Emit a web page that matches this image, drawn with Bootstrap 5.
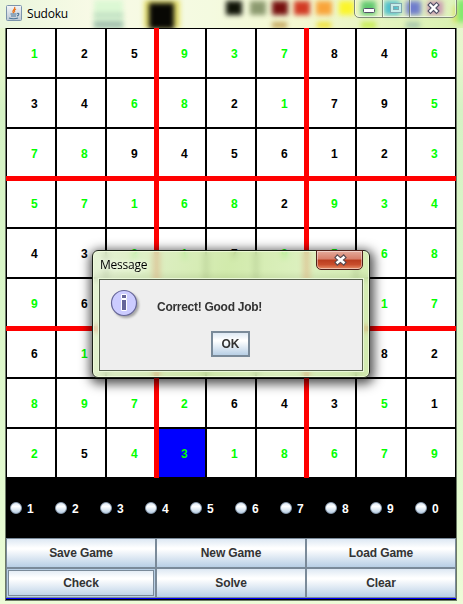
<!DOCTYPE html>
<html lang="en">
<head>
<meta charset="utf-8">
<title>Sudoku</title>
<link href="https://cdn.jsdelivr.net/npm/bootstrap@5.3.0/dist/css/bootstrap.min.css" rel="stylesheet">
<style>
body{width:463px;height:604px;overflow:hidden;font:bold 12px/14px "Liberation Sans",Arial,sans-serif;color:#000}
.win{width:463px;height:604px;padding:0 6px 3px;overflow:hidden;background:linear-gradient(#e8f6d0 0,#e5f7cc 60px,#d5f2c4 110px,#daf6c8 300px,#e4fad0 500px,#edfcd8 604px)}
.titlebar-x{height:28px;font:12px/16px "Open Sans","Noto Sans",sans-serif;margin:0 -6px}
.glass{inset:0;overflow:hidden;background:linear-gradient(90deg,#e9f6dc,#f8fae6 20%,#f4fae0 45%,#f4f8d0 65%,#d8f1b0)}
.glass i{position:absolute;filter:blur(2.5px)}
.title-x{left:27px;top:6px;letter-spacing:-.2px;text-shadow:0 0 5px #fff}
.java{left:6px;top:5px}
.winbtns{left:354px;top:-4px;width:103px;height:22px;border:1px solid #7f8a76;border-radius:0 0 5px 5px;box-shadow:inset 0 0 0 1px #ffffff80;background:#ffffff25;overflow:hidden}
.client{width:450px;outline:1px solid #6c7a66}
.board{display:grid;grid-template-columns:repeat(9,50px);grid-auto-rows:50px}
.cell-x{border:1px solid #000;background:#fff;padding:17px 0 0 24px;line-height:16px}
.g{color:#0f0}.sel{background:#00f}
.bar-v,.bar-h{background:#f00}
.bar-v{width:5px;height:450px;top:0}.bar-h{height:5px;width:450px;left:0}
.v1{left:148px}.v2{left:298px}.h1x{top:148px}.h2x{top:298px}
.radios{height:60px;background:#000;color:#fff;padding:0 0 0 4px}
.radios label{width:45px;gap:5px}
.dot{width:12px;height:12px;border-radius:50%;border:1px solid #8a9cb0;background:linear-gradient(#dde8f3,#fff 35%,#b8cfe5)}
.radio-text{padding-top:2px}
.btns{display:grid;grid-template-columns:repeat(3,150px);grid-auto-rows:30px}
.mbtn{font:bold 12px/14px "Liberation Sans",Arial,sans-serif;letter-spacing:-.12px;color:#333;border:1px solid #7a8a99;border-radius:0;padding:0;background:linear-gradient(#dde8f3 0,#fff 32%,#fff 36%,#b8cfe5 100%)}
.focus-x{box-shadow:inset 0 0 0 1px #b8cfe5,inset 0 0 0 2px #7a8a99}
.foot{height:2px;background:linear-gradient(#00f 50%,#000 50%)}
.dlg{left:92px;top:250px;width:278px;height:128px;padding:0 6px 6px;border:1px solid #1c2118;border-radius:6px;background:linear-gradient(105deg,#e0efcbcc,#c6e597cc 45%,#d4edb0cc 70%,#c7e69bcc);backdrop-filter:blur(3px);box-shadow:inset 0 0 0 1px #f4ffe0c0,1px 3px 11px 3px #000000b0}
.dtitle{height:28px;font:12px/16px "Open Sans","Noto Sans",sans-serif;padding:6px 0 0 1px;text-shadow:0 0 5px #fff;letter-spacing:-.25px}
.dclose{right:6px;top:-1px;width:47px;height:20px;border:1px solid #4d2019;border-radius:0 0 5px 5px;background:linear-gradient(#e4ab9c 0,#d77e69 45%,#b93c1e 50%,#c84d2c 75%,#e78f68);box-shadow:inset 0 0 0 1px #ffffff70}
.dbody{height:92px;background:#eee;border:1px solid #56604c;color:#333;box-shadow:0 0 0 1px #eaf8d8}
.msg{margin:12px 0 0 15px;letter-spacing:-.28px}
.ok{width:39px;height:26px;border-width:2px;margin:9px 1px 0 0}
</style>
</head>
<body>
<div class="win position-relative">
<header class="titlebar-x position-relative">
<div class="glass position-absolute" id="glass"></div>
<svg class="java position-absolute" width="16" height="16" viewBox="0 0 16 16"><defs><linearGradient id="jg" x2="0" y2="1"><stop stop-color="#f4f6f8"/><stop offset="1" stop-color="#bcc8d4"/></linearGradient></defs><rect x=".5" y=".5" width="15" height="15" rx="1" fill="url(#jg)" stroke="#7c94ac"/><path d="M8.500 2C10 4 6 5 7 7l1 1M10 4c-2 1-2 2-1 3" fill="none" stroke="#e8731c" stroke-width="1.300"/><path d="M4.500 9h6M5 11h5M3 13c2 1 7 1 9 0M11 8.500c3-1 2 2 0 2.500" fill="none" stroke="#4d7598" stroke-width="1.100"/></svg>
<span class="title-x position-absolute">Sudoku</span>
<div class="winbtns position-absolute"><svg class="d-block" width="101" height="20" viewBox="355 -3 101 20"><path d="M382.500-3V17M409.500-3V17" stroke="#6d7a66" opacity=".8"/><path d="M383.500-3V17M410.500-3V17" stroke="#fff" opacity=".5"/><rect x="363.500" y="8.500" width="11" height="4" rx="1" fill="#fff" stroke="#555468"/><g fill="none"><path d="M392 5h8v6h-8z" stroke="#7fa9b0" stroke-width="4"/><path d="M392 5h8v6h-8z" stroke="#c8ecea" stroke-width="2"/></g><path d="M430.500 5l6 6m0-6l-6 6" stroke="#555468" stroke-width="4.600" stroke-linecap="square"/><path d="M430.500 5l6 6m0-6l-6 6" stroke="#fff" stroke-width="2.400" stroke-linecap="square"/></svg></div>
</header>
<main class="client">
<div class="position-relative"><div class="board" id="board"></div>
<div class="bar-v v1 position-absolute"></div><div class="bar-v v2 position-absolute"></div><div class="bar-h h1x position-absolute"></div><div class="bar-h h2x position-absolute"></div></div>
<div class="radios d-flex align-items-center" id="radios"></div>
<div class="btns"><button class="mbtn">Save Game</button><button class="mbtn">New Game</button><button class="mbtn">Load Game</button><button class="mbtn focus-x">Check</button><button class="mbtn">Solve</button><button class="mbtn">Clear</button></div>
<div class="foot"></div>
</main>
<section class="dlg position-absolute" role="dialog">
<div class="dtitle">Message</div>
<div class="dclose position-absolute"><svg class="d-block" width="45" height="18" viewBox="0 0 45 18"><path d="M20.500 6.500l6 5m0-5l-6 5" stroke="#574a50" stroke-width="4.800" stroke-linecap="square"/><path d="M20.500 6.500l6 5m0-5l-6 5" stroke="#fff" stroke-width="2.600" stroke-linecap="square"/></svg></div>
<div class="dbody d-flex flex-column align-items-center">
<div class="d-flex align-self-start ps-2 pt-2"><svg width="34" height="34" viewBox="0 0 34 34"><defs><filter id="bl"><feGaussianBlur stdDeviation="1.300"/></filter></defs><circle cx="18" cy="17" r="13" fill="#888" opacity=".7" filter="url(#bl)"/><circle cx="16" cy="15" r="12.500" fill="#ccf" stroke="#669" stroke-width="1.200"/><path d="M13.500 6.500h5v4h-5zM13.500 11.500h5v11h-5z" fill="#669" stroke="#fff"/></svg><span class="msg">Correct! Good Job!</span></div>
<button class="mbtn ok">OK</button>
</div>
</section>
</div>
<script>
const rows=["g1 2 5 g9 g3 g7 8 4 g6","3 4 g6 g8 2 g1 7 9 g5","g7 g8 9 4 5 6 1 2 g3","g5 g7 g1 g6 g8 2 g9 g3 g4","4 3 g2 g1 7 g9 g5 g6 g8","g9 6 - - - - - g1 g7","6 g1 - - - - - 8 2","g8 g9 g7 g2 6 4 3 g5 1","g2 5 g4 g3 g1 g8 g6 g7 g9"];
board.innerHTML=rows.map((r,y)=>r.split(" ").map((c,x)=>`<div class="cell-x ${c[0]=="g"?"g":""} ${y==8&&x==3?"sel":""}">${c=="-"?"":c.slice(-1)}</div>`).join("")).join("");
radios.innerHTML=[1,2,3,4,5,6,7,8,9,0].map(n=>`<label class="d-flex align-items-center flex-shrink-0"><span class="dot"></span><span class="radio-text">${n}</span></label>`).join("");
radios.style.overflow="hidden";
glass.innerHTML=[[94,0,29,28,"#dcf8d4"],[94,13,29,4,"#bcd9c0"],[94,21,29,7,"#a3bfae"],[144,0,36,28,"#e6e070"],[149,3,25,26,"#080804"],[226,1,16,14,"#101408"],[250,1,16,14,"#8c9a70"],[272,1,16,14,"#76100f"],[294,1,16,14,"#d23a24"],[316,1,16,14,"#f9a43a"],[339,1,15,14,"#fbf52c"],[361,1,15,14,"#48c058"],[384,1,16,14,"#30b4c4"],[406,1,15,14,"#5868c4"],[427,1,16,14,"#c08aa4"],[272,22,15,6,"#c5a860"],[317,22,14,6,"#efe137"],[361,22,15,6,"#c6ec50"],[406,22,14,6,"#a5c5ac"],[453,6,6,16,"#d8e060"],[458,0,8,22,"#78e868"]].map(([x,y,w,h,c])=>`<i style="left:${x}px;top:${y}px;width:${w}px;height:${h}px;background:${c}"></i>`).join("");
</script>
<script src="https://cdn.jsdelivr.net/npm/bootstrap@5.3.0/dist/js/bootstrap.bundle.min.js"></script>
</body>
</html>
